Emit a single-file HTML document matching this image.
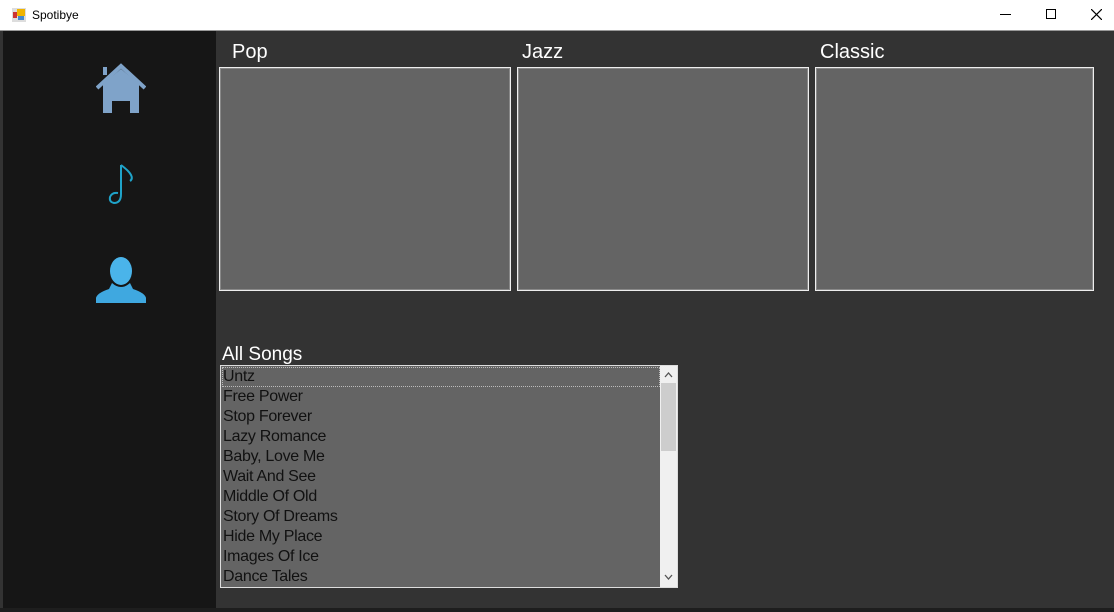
<!DOCTYPE html>
<html><head><style>
*{margin:0;padding:0;box-sizing:border-box}
body{width:1114px;height:612px;background:#333;position:relative;overflow:hidden;font-family:"Liberation Sans",sans-serif}
.abs{position:absolute}
.tb{left:0;top:0;width:1114px;height:31px;background:#fff;border-bottom:1px solid #999}
.side{left:3px;top:31px;width:213px;height:577px;background:#161616}
.lbl{color:#fff;font-size:20px}
.box{background:#646464;border:1px solid #eee;box-shadow:inset 0 0 0 1px #888}
.list{left:220px;top:365px;width:458px;height:223px;background:#646464;border:1px solid #ddd}
.it{position:absolute;left:2px;font-size:16px;color:#111;height:20px;line-height:20px;letter-spacing:-0.3px}
</style></head><body>
<div class="abs tb">
<svg class="abs" style="left:12px;top:8px" width="14" height="14"><rect x="0" y="0" width="14" height="14" fill="#ddd"/><rect x="5" y="1" width="8" height="7" fill="#f0b400"/><rect x="1" y="4" width="4" height="6" fill="#c33"/><rect x="6" y="8" width="6" height="4" fill="#48c"/></svg>
<div class="abs" style="left:32px;top:8px;font-size:12px;color:#000">Spotibye</div>
<div class="abs" style="left:1000px;top:14px;width:11px;height:1px;background:#000"></div>
<div class="abs" style="left:1046px;top:9px;width:10px;height:10px;border:1px solid #000"></div>
<svg class="abs" style="left:1091px;top:9px" width="11" height="11"><path d="M0 0L11 11M11 0L0 11" stroke="#000" stroke-width="1.2"/></svg>
</div>
<div class="abs" style="left:0;top:608px;width:1114px;height:4px;background:#1e1e1e"></div>
<div class="abs side"></div>
<svg class="abs" style="left:96px;top:63px" width="50" height="51" viewBox="0 0 50 51"><path d="M7 4h4v8h-4z" fill="#7fa3c9"/><path d="M1 25L25 3L49 25" stroke="#7fa3c9" stroke-width="4" fill="none"/><path d="M7 21L25 6L43 21V50H34V38H16V50H7Z" fill="#7fa3c9"/></svg>
<svg class="abs" style="left:106px;top:163px" width="30" height="42" viewBox="0 0 30 42"><path d="M15 2V31M15 2Q23 8 25 12Q27 16 24 18" stroke="#1fa3c9" stroke-width="2" fill="none"/><path d="M15 31Q15 40 8 40Q3 39 4 34Q6 29 12 30" stroke="#1fa3c9" stroke-width="2" fill="none"/></svg>
<svg class="abs" style="left:95px;top:257px" width="52" height="47" viewBox="0 0 52 47"><ellipse cx="26" cy="14" rx="11" ry="14" fill="#4ab4ea"/><path d="M17 26Q26 34 35 26L38 32Q50 36 51 41V46H1V41Q2 36 14 32Z" fill="#3fa8e0"/></svg>
<div class="abs lbl" style="left:232px;top:41px">Pop</div>
<div class="abs lbl" style="left:522px;top:41px">Jazz</div>
<div class="abs lbl" style="left:820px;top:41px">Classic</div>
<div class="abs box" style="left:219px;top:67px;width:292px;height:224px"></div>
<div class="abs box" style="left:517px;top:67px;width:292px;height:224px"></div>
<div class="abs box" style="left:815px;top:67px;width:279px;height:224px"></div>
<div class="abs lbl" style="left:222px;top:344px;font-size:19px">All Songs</div>
<div class="abs list">
<div class="abs" style="left:1px;top:1px;width:438px;height:20px;border:1px dotted #bbb"></div>
<div class="it" style="top:1px">Untz</div>
<div class="it" style="top:21px">Free Power</div>
<div class="it" style="top:41px">Stop Forever</div>
<div class="it" style="top:61px">Lazy Romance</div>
<div class="it" style="top:81px">Baby, Love Me</div>
<div class="it" style="top:101px">Wait And See</div>
<div class="it" style="top:121px">Middle Of Old</div>
<div class="it" style="top:141px">Story Of Dreams</div>
<div class="it" style="top:161px">Hide My Place</div>
<div class="it" style="top:181px">Images Of Ice</div>
<div class="it" style="top:201px">Dance Tales</div>
<div class="abs" style="left:439px;top:0;width:17px;height:221px;background:#f0f0f0">
<div class="abs" style="left:1px;top:17px;width:15px;height:68px;background:#cdcdcd"></div>
<svg class="abs" style="left:4px;top:6px" width="9" height="6"><path d="M1 5L4.5 1L8 5" stroke="#555" stroke-width="1.3" fill="none"/></svg>
<svg class="abs" style="left:4px;top:208px" width="9" height="6"><path d="M1 1L4.5 5L8 1" stroke="#555" stroke-width="1.3" fill="none"/></svg>
</div>
</div>
</body></html>
